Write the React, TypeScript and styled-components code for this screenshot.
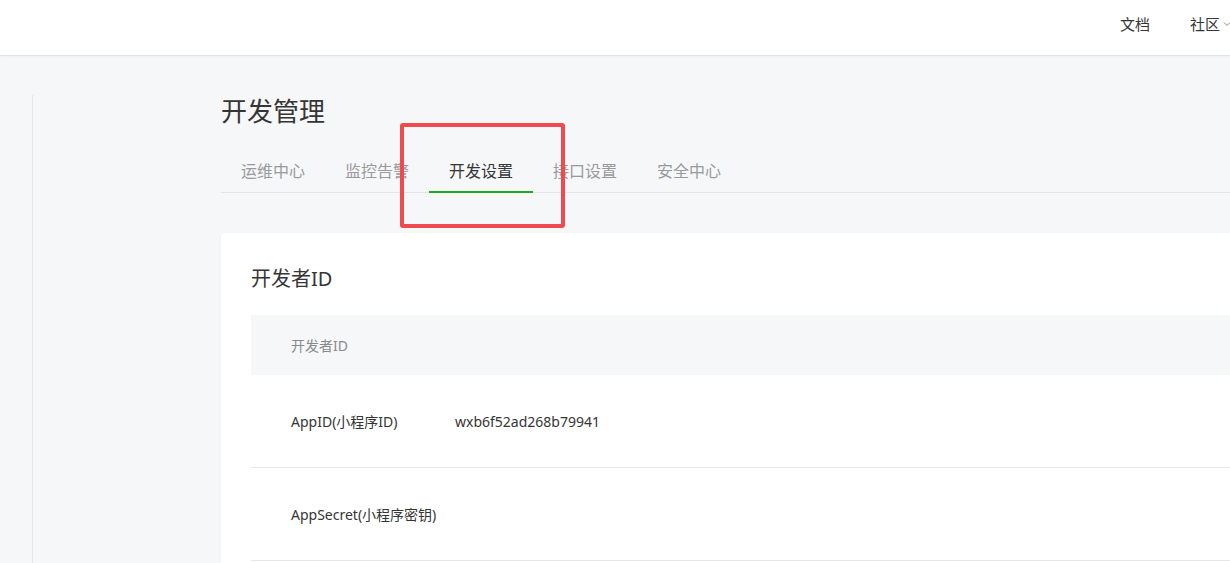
import styled, { createGlobalStyle } from 'styled-components';

const GlobalStyle = createGlobalStyle`
  html, body {
    margin: 0;
    padding: 0;
    background: #f6f7f9;
    overflow: hidden;
    font-family: "Noto Sans", "Noto Sans CJK SC", sans-serif;
    color: #353535;
  }
  * {
    box-sizing: border-box;
  }
`;

const tabs = ['运维中心', '监控告警', '开发设置', '接口设置', '安全中心'];

const rows = [
  { label: 'AppID(小程序ID)', value: 'wxb6f52ad268b79941' },
  { label: 'AppSecret(小程序密钥)', value: '' }
];

export default function App() {
  const active = 2;

  return (
    <Page>
      <GlobalStyle />
      <Header>
        <Nav>
          <NavItem>文档</NavItem>
          <NavItem>
            社区
            <Chevron viewBox="0 0 10 10">
              <path d="M2 3.5 L5 6.5 L8 3.5" fill="none" stroke="#8a8a8a" strokeWidth="1" />
            </Chevron>
          </NavItem>
        </Nav>
      </Header>
      <Body>
        <Sidebar />
        <Main>
          <Title>开发管理</Title>
          <TabsWrap>
            <TabBar>
              {tabs.map((t, i) => (
                <Tab key={t} $active={i === active}>
                  {t}
                </Tab>
              ))}
            </TabBar>
            <Highlight />
          </TabsWrap>
          <Card>
            <CardTitle>开发者ID</CardTitle>
            <Table>
              <TableHead>开发者ID</TableHead>
              {rows.map((r) => (
                <Row key={r.label}>
                  <Label>{r.label}</Label>
                  <Value>{r.value}</Value>
                </Row>
              ))}
            </Table>
          </Card>
        </Main>
      </Body>
    </Page>
  );
}

const Page = styled.div`
  width: 1230px;
  height: 563px;
  overflow: hidden;
`;

const Header = styled.header`
  height: 56px;
  background: #fff;
  border-bottom: 1px solid #e3e3e3;
  box-shadow: 0 1px 2px rgba(0, 0, 0, 0.03);
  display: flex;
  justify-content: flex-end;
  align-items: center;
  margin-right: -2px;
`;

const Nav = styled.nav`
  display: flex;
  align-items: center;
  gap: 40px;
  padding-bottom: 8px;
`;

const NavItem = styled.span`
  display: flex;
  align-items: center;
  font-size: 15px;
  color: #353535;
`;

const Chevron = styled.svg`
  width: 10px;
  height: 10px;
  margin-left: 2px;
`;

const Body = styled.div`
  display: flex;
`;

const Sidebar = styled.aside`
  flex: none;
  width: 33px;
  height: 470px;
  margin-top: 39px;
  border-right: 1px solid #e6e7e9;
`;

const Main = styled.main`
  flex: none;
  width: 1100px;
  margin-left: 188px;
  padding-top: 37px;
`;

const Title = styled.h1`
  margin: 0;
  font-size: 26px;
  font-weight: 400;
  line-height: 36px;
  color: #353535;
`;

const TabsWrap = styled.div`
  position: relative;
  margin-top: 22px;
`;

const TabBar = styled.div`
  display: flex;
  border-bottom: 1px solid #e3e4e6;
`;

const Tab = styled.div<{ $active?: boolean }>`
  padding: 0 20px;
  line-height: 40px;
  font-size: 16px;
  margin-bottom: -1px;
  color: ${(p) => (p.$active ? '#353535' : '#9a9a9a')};
  border-bottom: 2px solid ${(p) => (p.$active ? '#1aad19' : 'transparent')};
`;

const Highlight = styled.div`
  position: absolute;
  left: 179px;
  top: -28px;
  width: 165px;
  height: 105px;
  border: 4px solid #ef4a4f;
  border-radius: 3px;
  pointer-events: none;
`;

const Card = styled.section`
  margin-top: 40px;
  background: #fff;
  border-radius: 4px;
  box-shadow: 0 0 3px rgba(0, 0, 0, 0.03);
  padding: 30px 30px 0;
  height: 340px;
`;

const CardTitle = styled.h2`
  margin: 0;
  font-size: 20px;
  font-weight: 400;
  line-height: 32px;
  color: #353535;
`;

const Table = styled.div`
  margin-top: 20px;
`;

const TableHead = styled.div`
  height: 60px;
  display: flex;
  align-items: center;
  padding-left: 40px;
  background: #f6f7f9;
  font-size: 14px;
  color: #8a8a8a;
`;

const Row = styled.div`
  height: 93px;
  display: flex;
  align-items: center;
  padding-left: 40px;
  border-bottom: 1px solid #e7e7e7;
  font-size: 14px;
  color: #353535;
`;

const Label = styled.span`
  width: 164px;
  flex: none;
`;

const Value = styled.span`
  color: #353535;
`;
